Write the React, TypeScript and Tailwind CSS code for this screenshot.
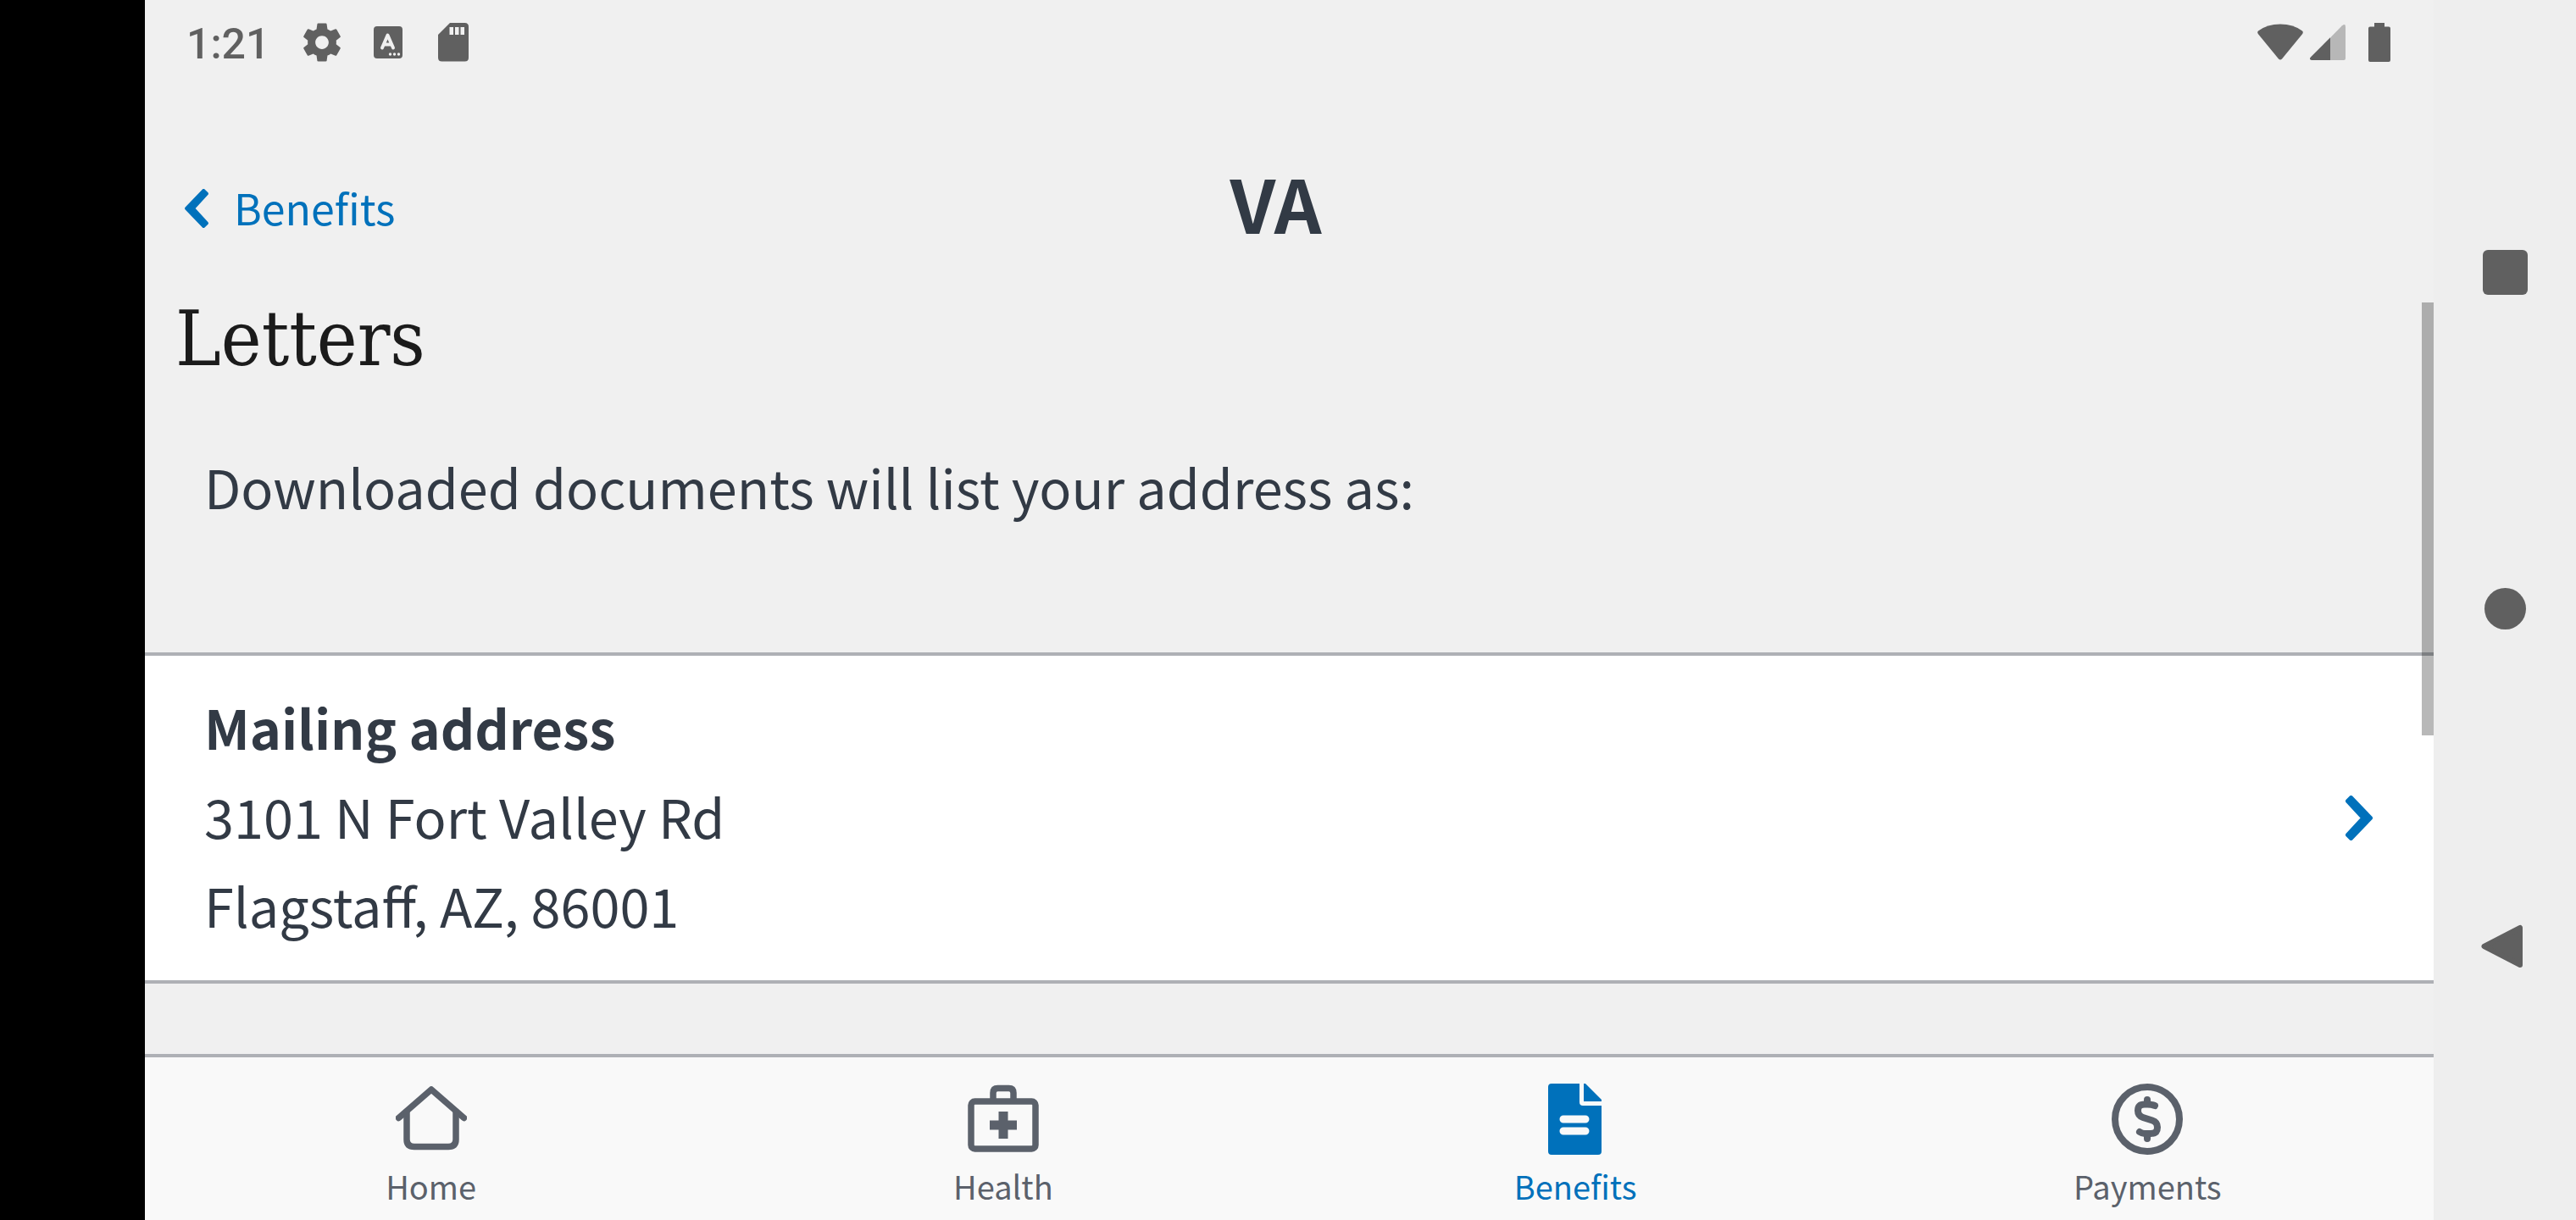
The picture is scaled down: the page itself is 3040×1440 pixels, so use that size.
import React from "react";

const sans = "font-['Noto_Sans_CJK_SC','Noto_Sans',sans-serif]";

function GearIcon() {
  return (
    <svg width="54" height="54" viewBox="0 0 24 24" fill="currentColor" aria-hidden="true">
      <path d="M19.43 12.98c.04-.32.07-.64.07-.98s-.03-.66-.07-.98l2.11-1.65c.19-.15.24-.42.12-.64l-2-3.46c-.12-.22-.39-.3-.61-.22l-2.49 1c-.52-.4-1.08-.73-1.69-.98l-.38-2.65C14.46 2.18 14.25 2 14 2h-4c-.25 0-.46.18-.49.42l-.38 2.65c-.61.25-1.17.59-1.69.98l-2.49-1c-.23-.09-.49 0-.61.22l-2 3.46c-.13.22-.07.49.12.64l2.11 1.65c-.04.32-.07.65-.07.98s.03.66.07.98l-2.11 1.65c-.19.15-.24.42-.12.64l2 3.46c.12.22.39.3.61.22l2.49-1c.52.4 1.08.73 1.69.98l.38 2.65c.03.24.24.42.49.42h4c.25 0 .46-.18.49-.42l.38-2.65c.61-.25 1.17-.59 1.69-.98l2.49 1c.23.09.49 0 .61-.22l2-3.46c.12-.22.07-.49-.12-.64l-2.11-1.65zM12 15.5c-1.93 0-3.5-1.57-3.5-3.5s1.57-3.5 3.5-3.5 3.5 1.57 3.5 3.5-1.57 3.5-3.5 3.5z" />
    </svg>
  );
}

function KeyboardIcon() {
  return (
    <svg width="34" height="38" viewBox="0 0 34 38" aria-hidden="true">
      <rect width="34" height="38" rx="4" fill="#606060" />
      <path d="M10 25.500L16.500 10.500L23 25.500M12.500 21.500H20.500" fill="none" stroke="#f0f0f0" strokeWidth="4" strokeLinecap="round" strokeLinejoin="round" />
      <g fill="#f0f0f0">
        <circle cx="19.500" cy="33" r="1.700" />
        <circle cx="24.500" cy="33" r="1.700" />
        <circle cx="29.500" cy="33" r="1.700" />
      </g>
    </svg>
  );
}

function SdCardIcon() {
  return (
    <svg width="36" height="46" viewBox="0 0 36 46" aria-hidden="true">
      <path d="M14 0H31.500Q36 0 36 4.500V41Q36 45.500 31.500 45.500H4.500Q0 45.500 0 41V14Z" fill="#606060" />
      <path d="M13.500 5h4.500v9h-4.500zM20 5h4.500v9H20zM26.500 5H31v9h-4.500z" fill="#f0f0f0" />
    </svg>
  );
}

function WifiIcon() {
  return (
    <svg width="54" height="44" viewBox="0 0 54 44" fill="#606060" aria-hidden="true">
      <path d="M1 8.500Q11.500 0.500 27 0.500T53 8.500Q54.500 10 53.200 12L29 41.500Q27 43.500 25 41.500L0.800 12Q-.5 10 1 8.500Z" />
    </svg>
  );
}

function SignalIcon() {
  return (
    <svg width="42" height="42" viewBox="0 0 42 42" aria-hidden="true">
      <path d="M24 15.500L38 1.200Q42-1.500 42 2.500V40Q42 42 40 42H24Z" fill="#b7b7b7" />
      <path d="M24 15.300V42H2Q-1.200 41.500.6 38.800Z" fill="#606060" />
    </svg>
  );
}

function BatteryIcon() {
  return (
    <svg width="26" height="46" viewBox="0 0 26 46" fill="#606060" aria-hidden="true">
      <path d="M7 0H19V4.500H24Q26 4.500 26 6.500V44Q26 46 24 46H2Q0 46 0 44V6.500Q0 4.500 2 4.500H7Z" />
    </svg>
  );
}

function Chevron({ className }: { className: string }) {
  return (
    <svg className={className} viewBox="0 0 32 53" fill="currentColor" stroke="currentColor" strokeWidth="5" strokeLinejoin="round" aria-hidden="true">
      <path d="M2.500 6.500L6.500 2.500L29.500 26.500L6.500 50.500L2.500 46.500L21 26.500Z" />
    </svg>
  );
}

function HomeIcon() {
  return (
    <svg width="84" height="84" viewBox="0 0 84 84" fill="none" stroke="currentColor" strokeWidth="7.500" strokeLinecap="round" strokeLinejoin="round" aria-hidden="true">
      <path d="M3.500 40.500L42 7L80.500 40.500" />
      <path d="M13 33V66Q13 74.500 22 74.500H62Q71 74.500 71 66V33" />
    </svg>
  );
}

function HealthIcon() {
  return (
    <svg width="84" height="84" viewBox="0 0 84 84" fill="none" stroke="currentColor" strokeWidth="7.500" aria-hidden="true">
      <rect x="4" y="21" width="76" height="56" rx="4.500" />
      <path d="M30 20V11Q30 5.500 35.500 5.500H48.500Q54 5.500 54 11V20" />
      <path d="M42 33V65M26 49H58" strokeWidth="11" />
    </svg>
  );
}

function BenefitsIcon() {
  return (
    <svg width="84" height="84" viewBox="0 0 84 84" fill="currentColor" aria-hidden="true">
      <path fillRule="evenodd" d="M14 0H47V22Q47 26 51 26H73V80Q73 84 69 84H14Q10 84 10 80V4Q10 0 14 0ZM28 37.500A4.500 4.500 0 0 0 28 46.500H54A4.500 4.500 0 0 0 54 37.500ZM28 51.500A4.500 4.500 0 0 0 28 60.500H54A4.500 4.500 0 0 0 54 51.500Z" />
      <path d="M52 0H54L73 19V21H52Z" />
    </svg>
  );
}

function PaymentsIcon() {
  return (
    <svg width="84" height="84" viewBox="0 0 84 84" fill="none" stroke="currentColor" strokeLinecap="round" strokeWidth="8" aria-hidden="true">
      <circle cx="42" cy="42" r="38" />
      <path d="M51 26Q47 24.500 42 24.500H39Q31 24.500 31 32Q31 38 37 40L48 43.500Q54 45.500 54 51.500Q54 59 46 59H39Q36 59 33 57" />
      <path d="M42 19V23M42 61V65" />
    </svg>
  );
}

const tabs = [
  { label: "Home", icon: <HomeIcon />, active: false },
  { label: "Health", icon: <HealthIcon />, active: false },
  { label: "Benefits", icon: <BenefitsIcon />, active: true },
  { label: "Payments", icon: <PaymentsIcon />, active: false },
];

export default function App() {
  return (
    <div className={`flex min-h-screen bg-black text-[#323a45] ${sans}`}>
      <div className="relative ml-[171px] flex min-w-0 flex-1 flex-col bg-[#f0f0f0]">
        <div className="flex h-[99px] items-center justify-between pr-[51px] pl-[49px] text-[#606060]">
          <div className="flex items-center">
            <span className="w-[133px] pt-1 font-['Roboto',sans-serif] text-[50px] leading-[56px] font-medium">1:21</span>
            <GearIcon />
            <div className="ml-[34px] flex items-center gap-[42px]">
              <KeyboardIcon />
              <SdCardIcon />
            </div>
          </div>
          <div className="flex items-center">
            <WifiIcon />
            <div className="ml-2"><SignalIcon /></div>
            <div className="ml-[27px]"><BatteryIcon /></div>
          </div>
        </div>

        <header className="grid h-[251px] grid-cols-3 items-center pt-[42px]">
          <button type="button" className="flex items-center gap-[30px] justify-self-start pl-[47px] text-[50px] leading-[70px] text-[#0071bb]">
            <Chevron className="h-[46px] w-[28px] rotate-180" />
            <span className="pb-1">Benefits</span>
          </button>
          <div className="justify-self-center pr-8 pb-4 text-[87px] leading-[96px] font-bold">VA</div>
        </header>

        <main className="flex-1">
          <h1 className="pl-[36px] font-['DejaVu_Serif_Condensed','DejaVu_Serif',serif] text-[90px] leading-[100px] text-[#1b1b1b]">Letters</h1>
          <p className="mt-[71px] pl-[70px] text-[63px] leading-[105px]">Downloaded documents will list your address as:</p>
          <button type="button" className="mt-36 flex w-full items-center justify-between border-y-4 border-[#aeb0b5] bg-white py-[31px] pr-[72px] pl-[70px] text-left text-[63px] leading-[105px]">
            <span className="flex flex-col pb-1.5">
              <strong className="font-bold">Mailing address</strong>
              <span>3101 N Fort Valley Rd</span>
              <span>Flagstaff, AZ, 86001</span>
            </span>
            <Chevron className="h-[53px] w-[32px] text-[#0071bb]" />
          </button>
        </main>

        <nav aria-label="Main" className="grid grid-cols-4 border-t-4 border-[#aeb0b5] bg-[#f9f9f9] pt-[31px] pb-3">
          {tabs.map((tab) => (
            <a
              key={tab.label}
              href="#"
              aria-current={tab.active ? "page" : undefined}
              className={`flex flex-col items-center gap-2 text-[38px] leading-[57px] ${tab.active ? "text-[#0071bb]" : "text-[#5b616b]"}`}
            >
              {tab.icon}
              {tab.label}
            </a>
          ))}
        </nav>

        <div className="absolute top-[357px] right-0 h-[511px] w-[14px] bg-black/28" />
      </div>

      <aside className="flex w-[168px] flex-col items-center justify-center gap-[346px] bg-[#eeeeee] text-[#606060]">
        <button type="button" aria-label="Recent apps" className="size-[53px] rounded-md bg-[#606060]" />
        <button type="button" aria-label="Home" className="size-[49px] rounded-full bg-[#606060]" />
        <button type="button" aria-label="Back">
          <svg width="56" height="56" viewBox="0 0 56 56" fill="currentColor" stroke="currentColor" strokeWidth="6" strokeLinejoin="round" aria-hidden="true">
            <path d="M3.500 28L46 6V50Z" />
          </svg>
        </button>
      </aside>
    </div>
  );
}
